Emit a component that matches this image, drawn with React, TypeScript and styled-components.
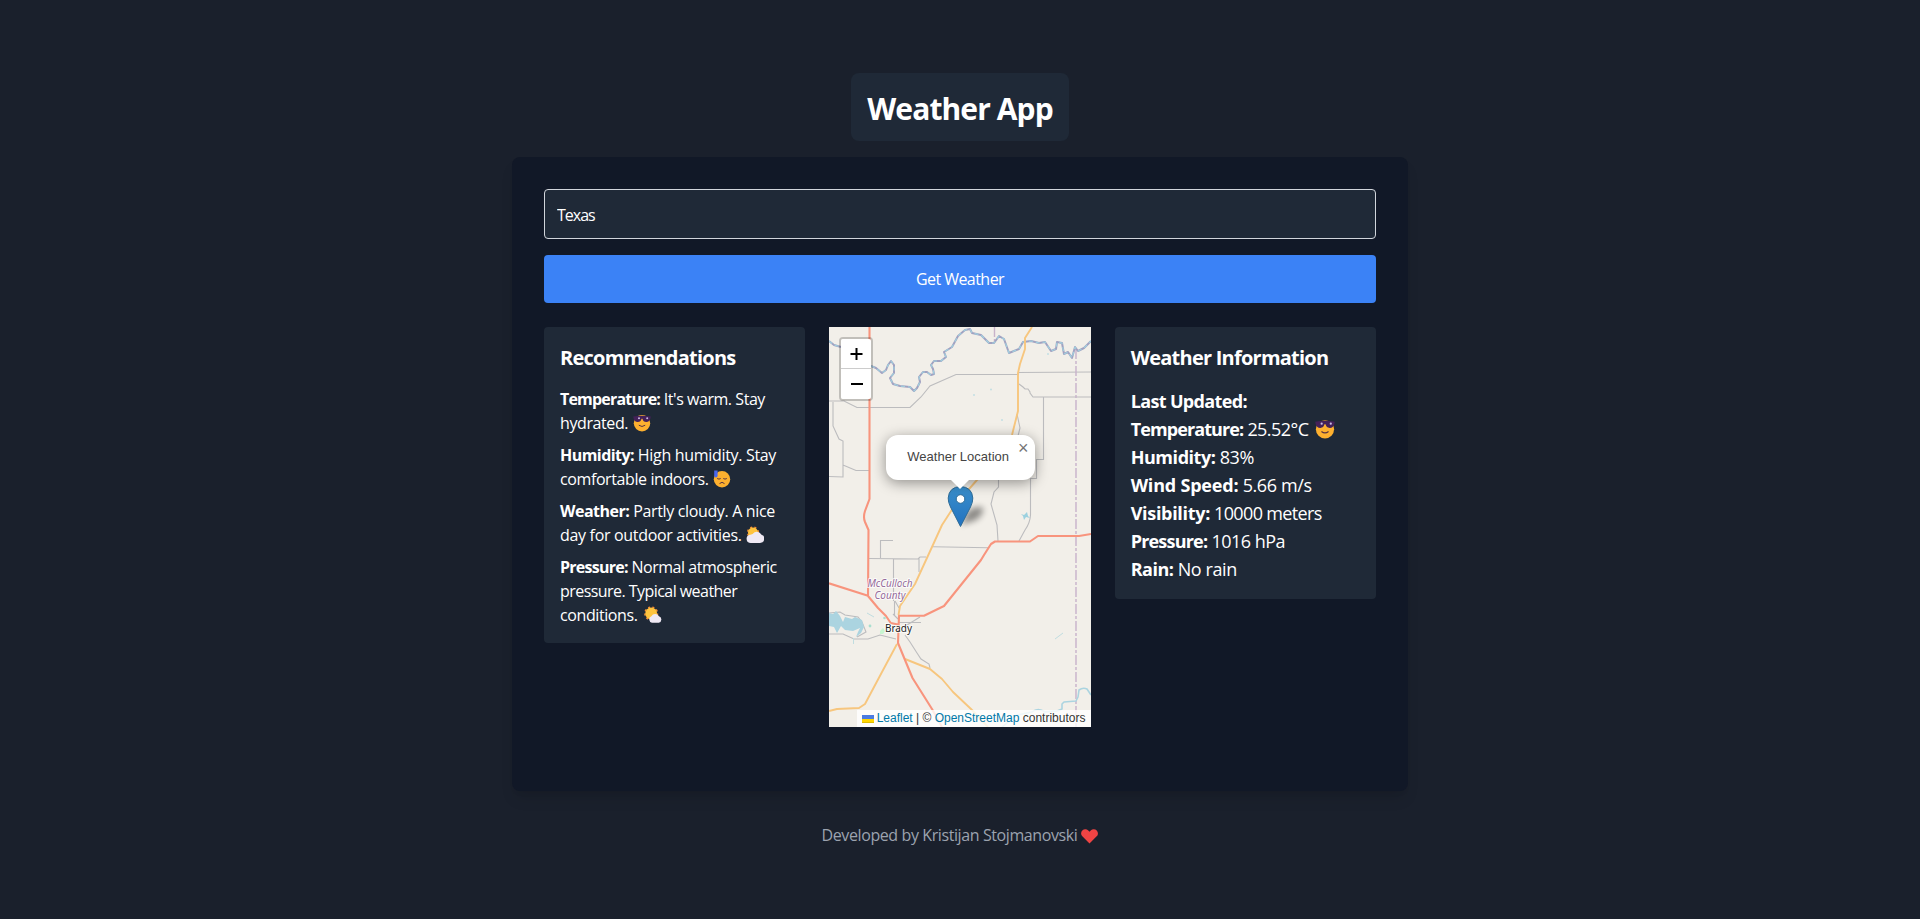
import React from "react";
import styled, { createGlobalStyle } from "styled-components";

const GlobalStyle = createGlobalStyle`
  *, *::before, *::after { box-sizing: border-box; }
  body { margin: 0; background: #1a202c; }
  h1, h2, p { margin: 0; }
`;

const ui = `"Segoe UI", "Open Sans", "Noto Sans", sans-serif`;

const Page = styled.div`
  min-height: 919px;
  display: flex;
  flex-direction: column;
  align-items: center;
  padding-top: 73px;
  background: #1a202c;
  color: #fff;
  font-family: ${ui};
  font-size: 16px;
  line-height: 24px;
`;

const Title = styled.h1`
  width: 218px;
  padding: 18px 0 14px;
  margin-bottom: 16px;
  border-radius: 8px;
  background: #1f2937;
  font-size: 30px;
  line-height: 36px;
  font-weight: 700;
  letter-spacing: -0.9px;
  text-align: center;
  white-space: nowrap;
`;

const Card = styled.main`
  width: 896px;
  padding: 32px 32px 64px;
  border-radius: 8px;
  background: #111827;
  box-shadow: 0 10px 15px -3px rgba(0, 0, 0, 0.1), 0 4px 6px -4px rgba(0, 0, 0, 0.1);
`;

const SearchForm = styled.form`
  display: flex;
  flex-direction: column;
  gap: 16px;
  margin-bottom: 24px;
`;

const CityInput = styled.input`
  height: 50px;
  padding: 13px 12px 11px;
  border: 1px solid #d1d5db;
  border-radius: 4px;
  outline: none;
  background: #1f2937;
  color: #fff;
  font: 16px/24px ${ui};
  letter-spacing: -1px;
`;

const SubmitButton = styled.button`
  height: 48px;
  padding: 12px;
  border: 0;
  border-radius: 4px;
  background: #3b82f6;
  color: #fff;
  font: 16px/24px ${ui};
  letter-spacing: -0.55px;
`;

const Columns = styled.div`
  display: grid;
  grid-template-columns: repeat(3, 1fr);
  gap: 24px;
  align-items: start;
`;

const Panel = styled.section`
  padding: 16px;
  border-radius: 4px;
  background: #1f2937;
`;

const PanelTitle = styled.h2`
  padding-top: 1px;
  margin-bottom: 15px;
  font-size: 20px;
  line-height: 28px;
  font-weight: 700;
  letter-spacing: -0.76px;
  white-space: nowrap;
`;

const AdviceList = styled.div`
  display: flex;
  flex-direction: column;
  gap: 8px;
`;

const Line = styled.div<{ $track?: number }>`
  display: flex;
  align-items: center;
  height: 24px;
  white-space: pre;
  letter-spacing: ${(p) => p.$track ?? -0.4}px;
`;

const FactRow = styled(Line)`
  height: 28px;
  font-size: 18px;
  line-height: 28px;
`;

const Label = styled.strong<{ $track?: number }>`
  font-weight: 700;
  letter-spacing: ${(p) => p.$track ?? -0.5}px;
`;

const Emoji = styled.svg<{ $size: number; $gap?: number }>`
  width: ${(p) => p.$size}px;
  height: ${(p) => p.$size}px;
  margin-left: ${(p) => p.$gap ?? 6}px;
  flex: none;
`;

const Cool = ({ size = 18, gap = 5 }: { size?: number; gap?: number }) => (
  <Emoji $size={size} $gap={gap} viewBox="0 0 18 18">
    <circle cx="9" cy="9.3" r="8.2" fill="#fdb02f" />
    <path d="M.2 2.5Q9 .8 17.8 2.5L17.5 4Q16.8 8 13.2 8Q10.2 8 9.5 4.8H8.5Q7.8 8 4.8 8Q1.2 8 .5 4Z" fill="#442159" />
    <circle cx="6" cy="4.2" r="1" fill="#cbb9e4" />
    <circle cx="14.2" cy="4.2" r="1" fill="#cbb9e4" />
    <path d="M5.8 11.2Q9 13.8 12.2 11.2" fill="none" stroke="#593442" strokeWidth="1" />
  </Emoji>
);

const Sweat = () => (
  <Emoji $size={18} $gap={5} viewBox="0 0 18 18">
    <circle cx="9" cy="9.3" r="8.2" fill="#fdb02f" />
    <path d="M1.2 .6H4.6V5.5Q4.6 7.4 2.9 7.4Q1.2 7.4 1.2 5.5Z" fill="#4967ef" />
    <path d="M4.2 8.5Q6 9.7 7.7 8.5M10.3 8.5Q12 9.7 13.8 8.5M6.5 13.6Q9 11 11.5 13.6" fill="none" stroke="#593442" />
  </Emoji>
);

const SunCloud = ({ sunny = false }: { sunny?: boolean }) => (
  <Emoji $size={18} $gap={sunny ? 6 : 4} viewBox="0 0 18 18">
    {sunny ? (
      <>
        <circle cx="7.2" cy="7.5" r="6.3" fill="none" stroke="#f58a33" strokeWidth="1.6" strokeDasharray="2 2.3" />
        <circle cx="7.2" cy="7.5" r="5.9" fill="#fec33e" />
        <path d="M8 16.7A3.4 3.4 0 0 1 7.4 10.2A4.3 4.3 0 0 1 15 10.3A3.3 3.3 0 0 1 14.8 16.7Z" fill="#efe9f4" />
      </>
    ) : (
      <>
        <circle cx="7" cy="6.5" r="5.3" fill="none" stroke="#f58a33" strokeWidth="1.6" strokeDasharray="2 2.3" />
        <circle cx="7" cy="6.5" r="5" fill="#fec33e" />
        <path d="M4.7 17A4.2 4.2 0 0 1 3.9 8.7Q6.5 9 8.6 6.3A5 5 0 0 1 15.2 8.4A4.4 4.4 0 0 1 14 17Z" fill="#efe9f4" />
      </>
    )}
  </Emoji>
);

const MapFrame = styled.section`
  position: relative;
  height: 400px;
  overflow: hidden;
  background: #f2efe9;
  font-family: "Liberation Sans", Arial, sans-serif;
`;

const MapDrawing = styled.svg`
  display: block;
  width: 262px;
  height: 400px;
`;

const ZoomControl = styled.div`
  position: absolute;
  left: 10px;
  top: 10px;
  width: 34px;
  border: 2px solid rgba(0, 0, 0, 0.2);
  border-radius: 4px;
  background-clip: padding-box;
`;

const ZoomButton = styled.button<{ $last?: boolean }>`
  display: flex;
  align-items: center;
  justify-content: center;
  width: 30px;
  height: 30px;
  padding: 0;
  border: 0;
  border-bottom: ${(p) => (p.$last ? "0" : "1px solid #ccc")};
  border-radius: ${(p) => (p.$last ? "0 0 2px 2px" : "2px 2px 0 0")};
  background: #fff;
`;

const Popup = styled.div`
  position: absolute;
  left: 57px;
  top: 108px;
  width: 149px;
  height: 45px;
  padding: 13px 24px 13px 21px;
  border-radius: 12px;
  background: #fff;
  color: #444;
  box-shadow: 0 3px 14px rgba(0, 0, 0, 0.4);
  font-size: 13px;
  line-height: 17px;
  white-space: nowrap;
`;

const PopupClose = styled.span`
  position: absolute;
  top: 1px;
  right: 0;
  width: 24px;
  height: 24px;
  color: #757575;
  font: 18px/24px "Liberation Sans", sans-serif;
  text-align: center;
`;

const PopupTip = styled.svg`
  position: absolute;
  top: 44px;
  left: 63px;
  width: 22px;
  height: 11px;
`;

const Attribution = styled.div`
  position: absolute;
  right: 0;
  bottom: 0;
  display: flex;
  align-items: center;
  width: 234px;
  height: 17px;
  padding: 0 5px;
  background: rgba(255, 255, 255, 0.8);
  color: #333;
  font-size: 12px;
  line-height: 17px;
  white-space: pre;
`;

const MapLink = styled.a`
  color: #0078a8;
`;

const Flag = styled.svg`
  width: 12px;
  height: 8px;
  margin-right: 3px;
`;

const Footer = styled.footer`
  display: flex;
  align-items: center;
  margin-top: 32px;
  padding-left: 2px;
  color: #9ca3af;
  letter-spacing: -0.4px;
`;

const Heart = styled.svg`
  width: 21px;
  height: 21px;
  margin-left: 2px;
`;

const RIVER =
  "M0 14L5 18L12 20M42 39L47 41L53 46L57 43L59 38L62 34L65 38V46L61 51L64 57L71 59L81 60L85 64L88 61L91 55L90 50L94 45L98 45L102 48L105 47L104 42L102 38L105 34L112 34L117 30L115 25L123 20L129 9L136 3L141 2L143 6L152 8L160 16L165 16L170 9L175 12L180 26L190 22L194 15L202 14L210 16L216 15L222 24L227 22L228 15L233 16L235 27L239 25L243 31L246 20L249 24L255 21L262 14";

const WeatherMap = () => (
  <MapFrame>
    <MapDrawing viewBox="0 0 262 400">
      <defs>
        <linearGradient id="pin" x1="0" y1="0" x2="0" y2="1">
          <stop offset="0" stopColor="#3a8fcb" />
          <stop offset="1" stopColor="#2272c0" />
        </linearGradient>
        <filter id="soft" x="-50%" y="-50%" width="200%" height="200%">
          <feGaussianBlur stdDeviation="3" />
        </filter>
      </defs>
      <g fill="none" stroke="#bcbcbe" strokeWidth="1.1">
        <path d="M0 74H15L28 80.5H81L92 70L101 59L127 47.5H189L190 45.5L262 45" />
        <path d="M190 57L194 60L196 62H199L201 65V66L204 70H262M214.500 70V132.500H207.500V151.500H201.500V188Q201 196 196 203L190 214" />
        <path d="M4 75V99L10 112L14 114V150L0 149.5M14 138L27 143.5H40" />
        <path d="M188 87L191 101L188 113M169.500 151V160L165 165L162 177L168 198L169 214" />
        <path d="M104 219.7L159 220.7M40 231.5L89 232L91 230H97M51.500 231V213.500H64M64.500 232V274M64 287L69 292M90 231V245M65.500 274V288M66 274L70 281" />
        <path d="M0 307H14L25 312H39L51 308L67 312M76 308L81 315L88 326L92 332L100 337L101 341M91 290L78 298M92 295.5H70" />
        <path d="M0 286L11 285L16 288L29 290L33 295L37 305L28 310" />
      </g>
      <g fill="none" stroke="#c8b2ca" strokeWidth="1.4" strokeDasharray="10 2 3 2">
        <path d="M247 22V400M165.5 0V15" />
      </g>
      <g fill="none" strokeLinejoin="round">
        <path d={RIVER} stroke="#a1a2c1" strokeWidth="2" />
        <path d={RIVER} stroke="#a0d0df" strokeWidth="1.2" strokeDasharray="4 3" />
        <path
          d="M203 0L196 11V22L191 37L189 46V84L183 108L173 133L148 153L126 178L113 198L103 220L86 257L71 279L69.5 288M68 317L53 345L36 377L30 381L8 382L0 384M76 332L101 342L113 352L124 365L142 382L159 400"
          stroke="#f7c67e"
          strokeWidth="1.9"
        />
        <path
          d="M40.5 0V172L36 184Q34 190 36 195L39.500 203L39 269L49 281L57 289L61.7 296L69 297.5M0 256.3L39 268.7M262 207L250 209H209L201 214.5H166L162 217L155 228L152 233L115 279L95 288.7H70L69 316L76 333L83.5 351L103 382L113 400"
          stroke="#f8947d"
          strokeWidth="2.1"
        />
        <path
          d="M173 400L188 388L203 385Q209 380 216 385L228 384L233 382V377L235 375L247 374L249 370L250 363Q254 360 258 362L262 368"
          stroke="#abd4e0"
          strokeWidth="1.6"
        />
        <path d="M38 286L45 290M24.5 311V317M226 312L234 306" stroke="#c0dde0" />
      </g>
      <path
        d="M0 286L4 287L7 284L11 289L14 295L16 290L23 292L26 290L33 293L35 300L32 306L27 310L29 305L31 301L24 304L16 303L12 299L8 306L5 300L0 299Z"
        fill="#abd4e0"
      />
      <path d="M192 187L195 188L198 185L199 189L201 191L197 190L195 193L194 189Z" fill="#9cd1df" />
      <path d="M51 304L54 301L56 304L54 307H51Z" fill="#c8f5d0" />
      <g fill="#a9dfcf">
        <circle cx="41" cy="299" r="1.4" />
        <circle cx="55.5" cy="291" r="1.3" />
      </g>
      <g fill="#c3dfe3">
        <circle cx="145" cy="68" r="1" />
        <circle cx="162" cy="62.5" r="1" />
        <circle cx="173" cy="93" r="1" />
        <circle cx="219" cy="27" r="1" />
      </g>
      <g
        fontFamily="Noto Sans, sans-serif"
        textAnchor="middle"
        paintOrder="stroke"
        stroke="#fff"
        strokeOpacity=".75"
        strokeWidth="2"
        strokeLinejoin="round"
      >
        <g fill="#956b9b" fontStyle="italic" fontSize="10">
          <text x="61" y="260" textLength="45">McCulloch</text>
          <text x="61" y="272" textLength="31">County</text>
        </g>
        <text x="69.5" y="305" fill="#222" fontSize="10" textLength="27">Brady</text>
      </g>
      <path d="M132 198L138 185Q147 178 154 181Q155 187 147 193Z" fill="#000" opacity=".42" filter="url(#soft)" />
      <path
        d="M131.5 199.5L121.5 180Q119 175 119.2 171Q120 160 131.5 159.5Q143 160 143.8 171Q144 175 141.5 180Z"
        fill="url(#pin)"
        stroke="#2e6c97"
      />
      <circle cx="131.5" cy="172" r="4.3" fill="#fff" stroke="#2e6c97" />
    </MapDrawing>
    <ZoomControl>
      <ZoomButton type="button" aria-label="Zoom in">
        <svg width="14" height="14" viewBox="0 0 14 14">
          <path d="M7.5 1V13M1.500 7H13.500" stroke="#000" strokeWidth="2" />
        </svg>
      </ZoomButton>
      <ZoomButton type="button" aria-label="Zoom out" $last>
        <svg width="14" height="14" viewBox="0 0 14 14">
          <path d="M2 7H14" stroke="#000" strokeWidth="2" />
        </svg>
      </ZoomButton>
    </ZoomControl>
    <Popup>
      Weather Location
      <PopupClose>×</PopupClose>
      <PopupTip viewBox="0 0 22 11">
        <path d="M1 0H21L11 10Z" fill="#fff" />
      </PopupTip>
    </Popup>
    <Attribution>
      <Flag viewBox="0 0 12 8">
        <path d="M0 0H12V4H0Z" fill="#4c7be1" />
        <path d="M0 4H12V7H0Z" fill="#ffd500" />
        <path d="M0 7H12V8H0Z" fill="#e0bc00" />
      </Flag>
      <MapLink>Leaflet</MapLink> | © <MapLink>OpenStreetMap</MapLink> contributors
    </Attribution>
  </MapFrame>
);

export default function App() {
  return (
    <>
      <GlobalStyle />
      <Page>
        <Title>Weather App</Title>
        <Card>
          <SearchForm>
            <CityInput defaultValue="Texas" />
            <SubmitButton type="button">Get Weather</SubmitButton>
          </SearchForm>
          <Columns>
            <Panel>
              <PanelTitle>Recommendations</PanelTitle>
              <AdviceList>
                <div>
                  <Line $track={-0.45}><Label $track={-0.8}>Temperature:</Label> It's warm. Stay</Line>
                  <Line>hydrated.<Cool /></Line>
                </div>
                <div>
                  <Line $track={-0.32}><Label $track={-0.55}>Humidity:</Label> High humidity. Stay</Line>
                  <Line>comfortable indoors.<Sweat /></Line>
                </div>
                <div>
                  <Line $track={-0.35}><Label>Weather:</Label> Partly cloudy. A nice</Line>
                  <Line $track={-0.32}>day for outdoor activities.<SunCloud /></Line>
                </div>
                <div>
                  <Line $track={-0.46}><Label $track={-0.75}>Pressure:</Label> Normal atmospheric</Line>
                  <Line $track={-0.55}>pressure. Typical weather</Line>
                  <Line>conditions.<SunCloud sunny /></Line>
                </div>
              </AdviceList>
            </Panel>
            <WeatherMap />
            <Panel>
              <PanelTitle>Weather Information</PanelTitle>
              <FactRow $track={-0.65}><Label $track={-0.65}>Last Updated:</Label></FactRow>
              <FactRow $track={-0.55}><Label $track={-0.9}>Temperature:</Label> 25.52°C<Cool size={20} gap={7} /></FactRow>
              <FactRow><Label $track={-0.45}>Humidity:</Label> 83%</FactRow>
              <FactRow><Label $track={-0.2}>Wind Speed:</Label> 5.66 m/s</FactRow>
              <FactRow $track={-0.65}><Label $track={-0.3}>Visibility:</Label> 10000 meters</FactRow>
              <FactRow $track={-0.5}><Label $track={-0.8}>Pressure:</Label> 1016 hPa</FactRow>
              <FactRow><Label $track={-0.5}>Rain:</Label> No rain</FactRow>
            </Panel>
          </Columns>
        </Card>
        <Footer>
          Developed by Kristijan Stojmanovski
          <Heart viewBox="0 0 20 20" fill="#ef4444">
            <path d="M3.172 5.172a4 4 0 015.656 0L10 6.343l1.172-1.171a4 4 0 115.656 5.656L10 17.657l-6.828-6.829a4 4 0 010-5.656z" />
          </Heart>
        </Footer>
      </Page>
    </>
  );
}
